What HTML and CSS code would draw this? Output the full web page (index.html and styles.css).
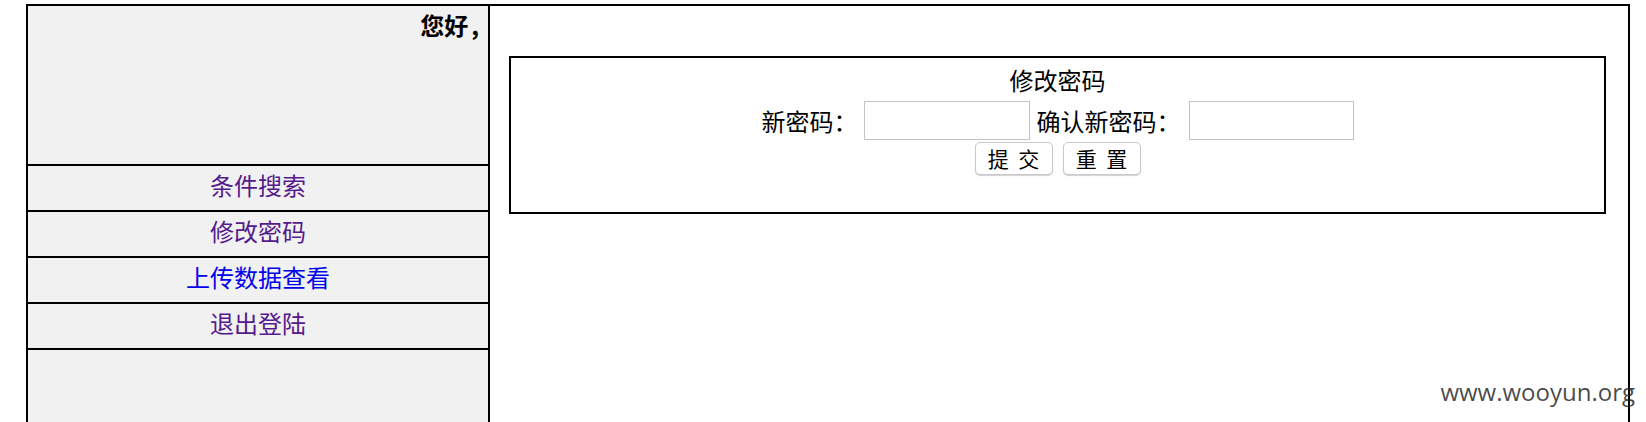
FILE: index.html
```html
<!DOCTYPE html>
<html lang="zh-CN">
<head>
<meta charset="utf-8">
<title>修改密码</title>
<link rel="stylesheet" href="styles.css">
</head>
<body>
<div class="frame">
  <aside class="sidebar">
    <div class="greeting">您好<span class="greeting-comma">,</span></div>
    <nav class="menu">
      <a class="menu-item" href="#">条件搜索</a>
      <a class="menu-item" href="#">修改密码</a>
      <a class="menu-item menu-item-fresh" href="#">上传数据查看</a>
      <a class="menu-item" href="#">退出登陆</a>
    </nav>
    <div class="sidebar-fill"></div>
  </aside>
  <main class="content">
    <form class="panel">
      <div class="panel-title">修改密码</div>
      <div class="field-row">
        <label class="field-label field-label-first">新密码：</label>
        <input class="field-input field-input-first" type="password">
        <label class="field-label field-label-second">确认新密码：</label>
        <input class="field-input" type="password">
      </div>
      <div class="actions">
        <button class="btn" type="submit">提 交</button>
        <button class="btn" type="reset">重 置</button>
      </div>
    </form>
  </main>
</div>
<div class="watermark">www.wooyun.org</div>
</body>
</html>
```
FILE: styles.css
```css
html, body {
  margin: 0;
  padding: 0;
  height: 422px;
  overflow: hidden;
  background: #ffffff;
}

body {
  font-family: "Noto Sans CJK SC", "Liberation Sans", sans-serif;
  font-size: 24px;
  color: #000000;
  position: relative;
}

.frame {
  display: flex;
  margin: 4px 0 0 26px;
  width: 1604px;
  height: 470px;
  border: 2px solid #000000;
  box-sizing: border-box;
}

.sidebar {
  width: 460px;
  flex: none;
  border-right: 2px solid #000000;
  background: #f1f1f1;
  display: flex;
  flex-direction: column;
}

.greeting {
  height: 158px;
  box-sizing: border-box;
  padding: 4px 9px 0 0;
  text-align: right;
  font-weight: bold;
  line-height: 30px;
}

.greeting-comma {
  margin-left: 3px;
}

.menu {
  display: flex;
  flex-direction: column;
}

.menu-item {
  display: block;
  height: 44px;
  border-top: 2px solid #000000;
  line-height: 38px;
  text-align: center;
  text-decoration: none;
  color: #551a8b;
}

.menu-item-fresh {
  color: #0000ee;
}

.sidebar-fill {
  flex: 1;
  border-top: 2px solid #000000;
}

.content {
  flex: 1;
  padding: 50px 22px 0 19px;
}

.panel {
  margin: 0;
  height: 158px;
  box-sizing: border-box;
  border: 2px solid #000000;
  padding-top: 7px;
  display: flex;
  flex-direction: column;
  align-items: center;
}

.panel-title {
  line-height: 30px;
}

.field-row {
  display: flex;
  align-items: center;
  margin-top: 6px;
  height: 39px;
}

.field-label {
  line-height: 39px;
  white-space: nowrap;
}

.field-label-first {
  margin-right: 6px;
}

.field-label-second {
  margin-right: 8px;
}

.field-input {
  width: 165px;
  height: 39px;
  box-sizing: border-box;
  border: 1px solid #c3c3c3;
  margin: 0;
  padding: 0 4px;
  background: #ffffff;
  font-size: 20px;
}

.field-input-first {
  width: 166px;
  margin-right: 7px;
}

.actions {
  display: flex;
  gap: 10px;
  margin-top: 2px;
}

.btn {
  width: 78px;
  height: 33px;
  box-sizing: border-box;
  margin: 0;
  padding: 0;
  font-family: "Noto Sans CJK SC", sans-serif;
  font-size: 21px;
  line-height: 31px;
  word-spacing: 5px;
  color: #000000;
  background: #ffffff;
  border: 1px solid #c9c9c9;
  border-radius: 5px;
  box-shadow: 0 1px 1px rgba(0, 0, 0, 0.18);
}

.watermark {
  position: absolute;
  top: 375px;
  right: 11px;
  font-family: "Open Sans", "Liberation Sans", sans-serif;
  font-size: 24px;
  line-height: 34px;
  color: rgba(30, 30, 30, 0.82);
  white-space: nowrap;
}
```
